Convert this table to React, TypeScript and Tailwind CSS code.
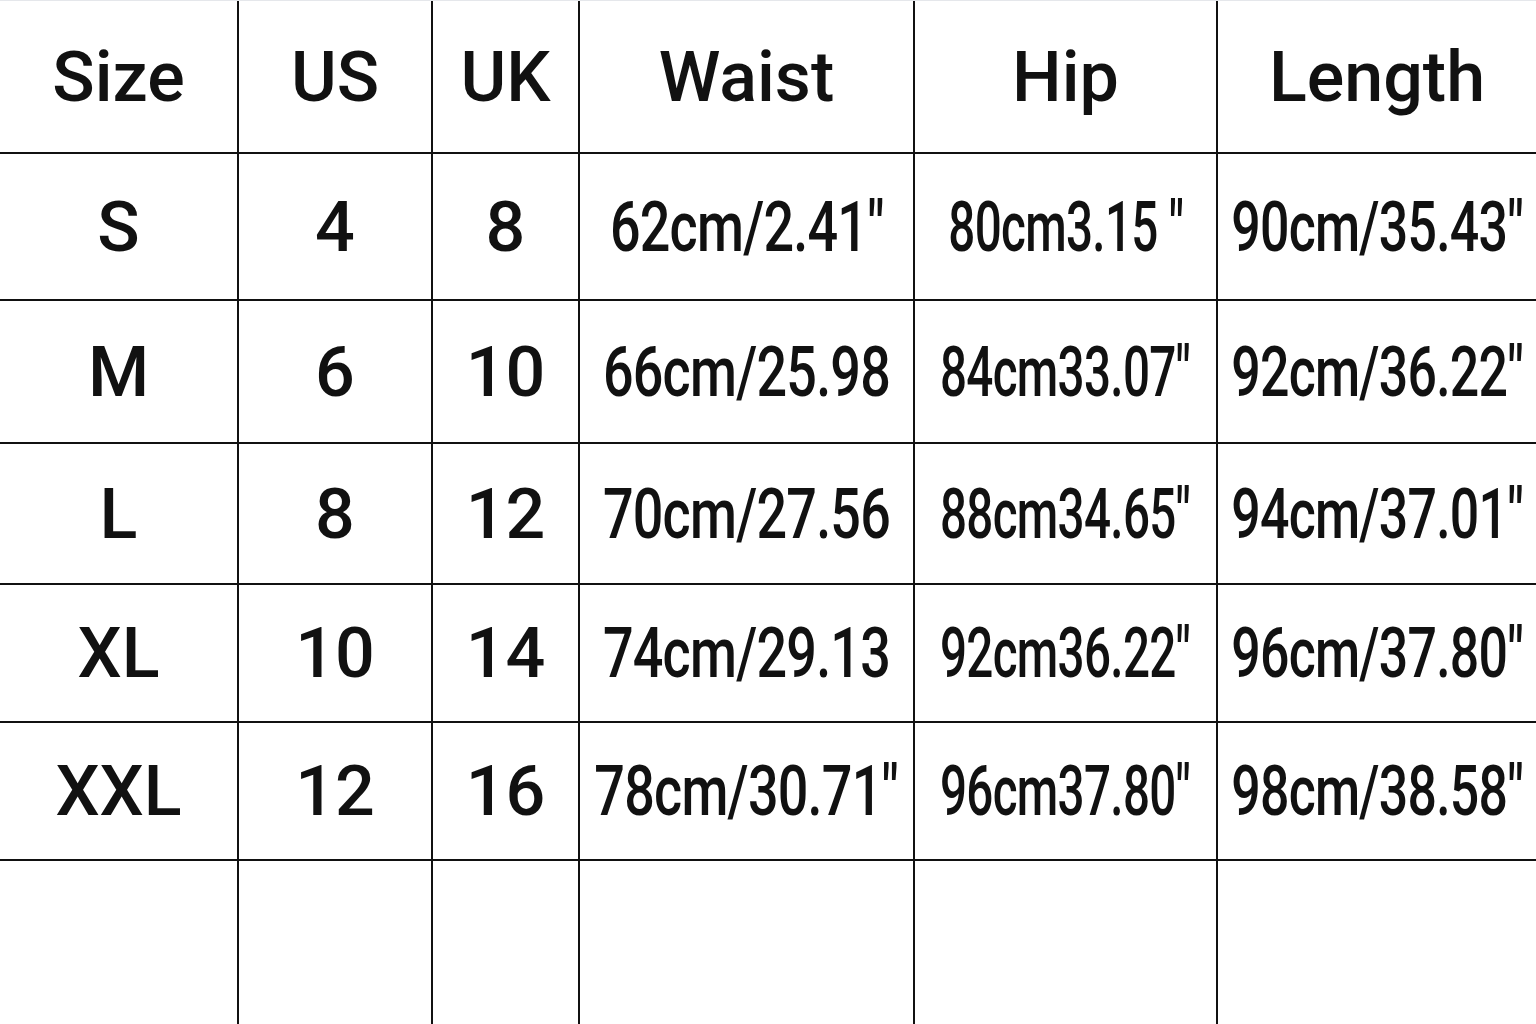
import React from "react";

const cols = ["w-[239px]", "w-[194px]", "w-[147px]", "w-[335px]", "w-[303px]", "w-[318px]"];
const scales = ["", "", "", "scale-x-[0.77]", "scale-x-[0.68]", "scale-x-[0.74]"];

const header = ["Size", "US", "UK", "Waist", "Hip", "Length"];

const rows: { h: string; cells: string[] }[] = [
  { h: "h-[147px]", cells: ["S", "4", "8", "62cm/2.41″", "80cm3.15 ″", "90cm/35.43″"] },
  { h: "h-[143px]", cells: ["M", "6", "10", "66cm/25.98", "84cm33.07″", "92cm/36.22″"] },
  { h: "h-[141px]", cells: ["L", "8", "12", "70cm/27.56", "88cm34.65″", "94cm/37.01″"] },
  { h: "h-[138px]", cells: ["XL", "10", "14", "74cm/29.13", "92cm36.22″", "96cm/37.80″"] },
  { h: "h-[138px]", cells: ["XXL", "12", "16", "78cm/30.71″", "96cm37.80″", "98cm/38.58″"] },
];

function Cell({ i, children }: { i: number; children?: React.ReactNode }) {
  return (
    <div
      className={`${cols[i]} shrink-0 min-w-0 h-full flex items-center justify-center ${i < 5 ? "border-r-2 border-[#111]" : ""}`}
    >
      {children}
    </div>
  );
}

export default function App() {
  return (
    <div
      className="w-[1536px] h-[1024px] bg-white text-[#111] overflow-hidden flex flex-col border-t border-gray-200"
      style={{ fontFamily: "Roboto, 'Liberation Sans', sans-serif" }}
    >
      <div className="h-[153px] shrink-0 flex border-b-2 border-[#111]">
        {header.map((t, i) => (
          <Cell key={t} i={i}>
            <span className="text-[70px] leading-none font-medium">{t}</span>
          </Cell>
        ))}
      </div>
      {rows.map((r, ri) => (
        <div key={ri} className={`${r.h} shrink-0 flex border-b-2 border-[#111]`}>
          {r.cells.map((t, i) => (
            <Cell key={i} i={i}>
              {i < 3 ? (
                <span className="text-[70px] leading-none font-medium">{t}</span>
              ) : (
                <span
                  className={`inline-block shrink-0 whitespace-nowrap text-[70px] leading-none font-medium tracking-[-1px] ${scales[i]}`}
                >
                  {t}
                </span>
              )}
            </Cell>
          ))}
        </div>
      ))}
      <div className="flex-1 flex">
        {header.map((t, i) => (
          <Cell key={t} i={i} />
        ))}
      </div>
    </div>
  );
}
